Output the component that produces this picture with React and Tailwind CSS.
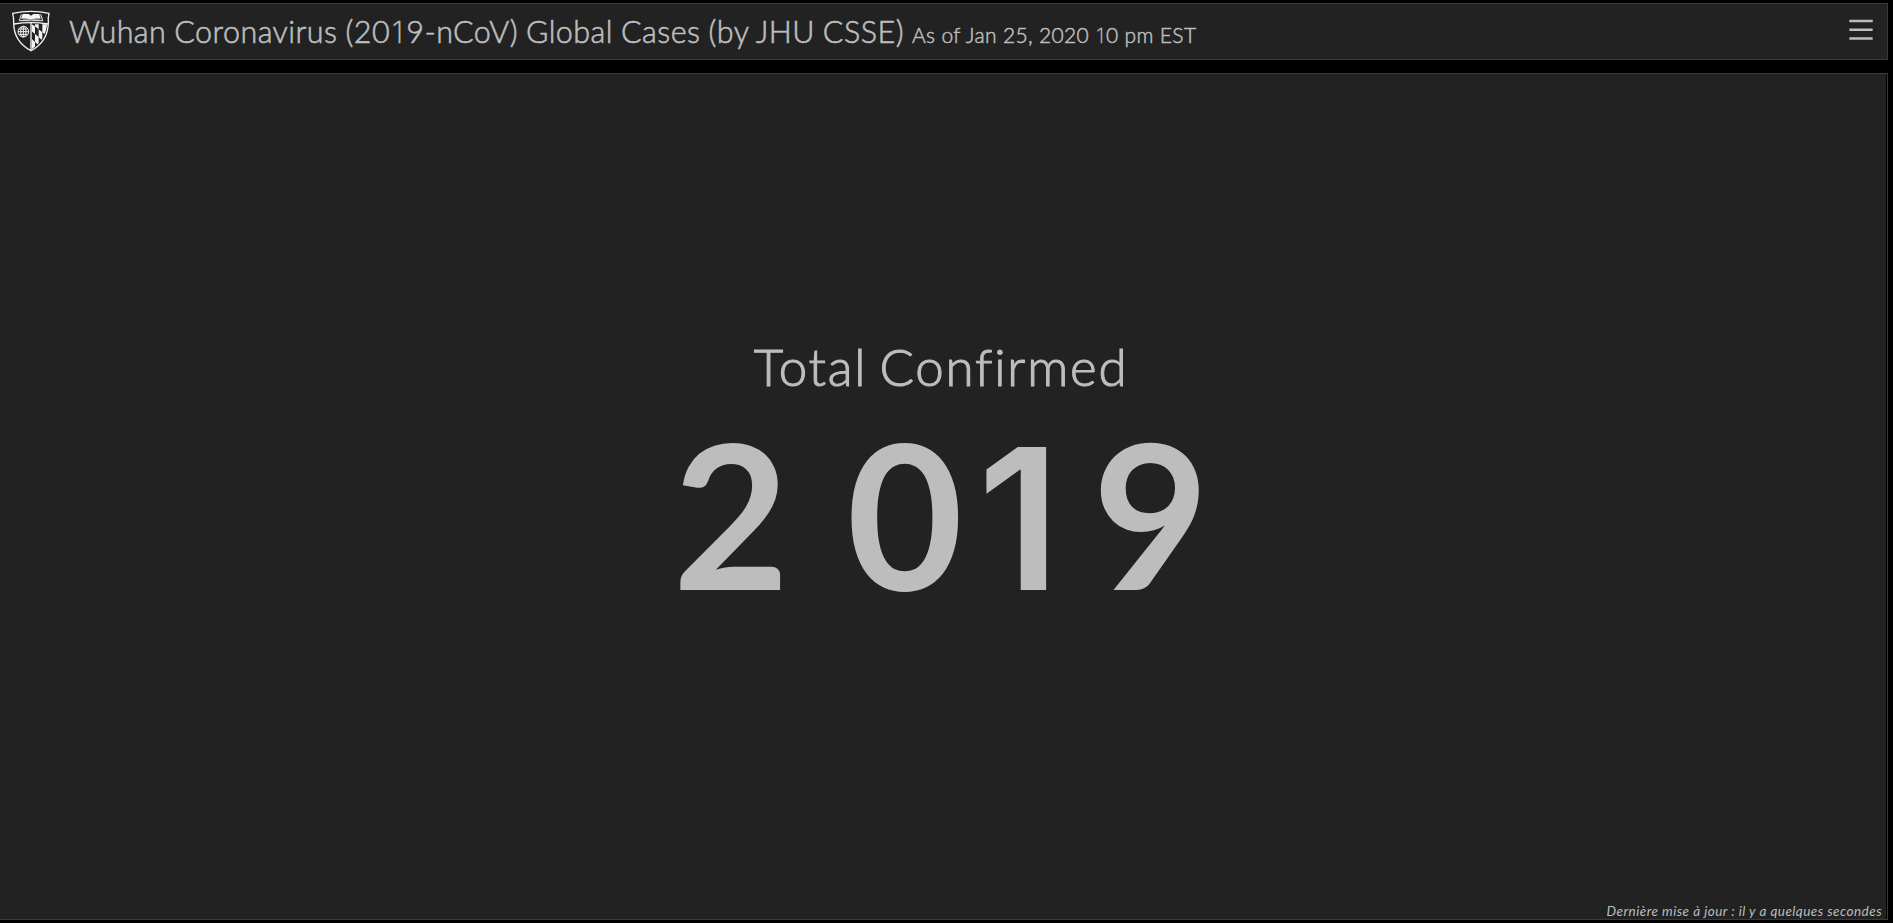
function Shield() {
  return (
    <svg viewBox="0 0 150 150" className="h-[50px] w-[50px] shrink-0" fill="none" stroke="#f4f4f4">
      <clipPath id="shield-right">
        <path d="M71 55 H117 C114 88 96 113 71 130 Z" />
      </clipPath>
      <path d="M14 22 Q69 10 123 22 C121 30 120 40 121 50 C120 92 99 118 69 134 C39 118 17 92 17 50 C18 40 16 30 14 22 Z" strokeWidth="4" />
      <path d="M18 54 Q69 46 120 54" strokeWidth="4" />
      <path d="M69 50 V133" strokeWidth="4" />
      <path d="M44 24 H62 L69 29 L76 24 H94 L98 38 Q82 36 69 42 Q56 36 39 38 Z" fill="#f4f4f4" stroke="none" />
      <path d="M40 25 L34 44 H104 L98 25" strokeWidth="3" />
      <path d="M44 40 Q60 38 69 43 Q78 38 94 40" stroke="#999999" strokeWidth="4" />
      <g strokeWidth="3">
        <circle cx="46" cy="77" r="16" />
        <ellipse cx="46" cy="77" rx="8" ry="16" />
        <path d="M46 61 V93 M30 77 H62 M33 69 H59 M33 85 H59" />
      </g>
      <g clipPath="url(#shield-right)" fill="#f4f4f4" stroke="none">
        <path d="M71 55 L81 61 V84 L71 76 Z" />
        <path d="M81 84 L92 93 V118 L81 108 Z" />
        <path d="M81 54 H92 V70 L81 61 Z" />
        <path d="M92 70 L103 79 V104 L92 93 Z" />
        <path d="M103 54 H119 V91 L103 79 Z" />
        <path d="M71 98 L81 108 V128 L71 132 Z" />
      </g>
    </svg>
  );
}

export default function App() {
  return (
    <div className="flex h-screen flex-col gap-[13px] overflow-hidden bg-black pt-[3px] pr-[5px] pb-[3px] font-['Lato',sans-serif] text-[#bdbdbd]">
      <header className="flex h-[57px] shrink-0 items-start border-y border-r border-[#3a3a3a] bg-[#222222] pt-[2px] pr-[14px] pl-2">
        <Shield />
        <h1 className="ml-[11px] flex grow items-baseline pt-[7px] leading-[36px] font-light whitespace-nowrap [-webkit-text-stroke:0.6px_#bdbdbd]">
          <span className="text-[30.5px] tracking-[0.46px] [word-spacing:-0.8px]">
            Wuhan Coronavirus (20<span className="pl-[2px] font-['Inter'] text-[29.5px] font-extralight tracking-[3px] [-webkit-text-stroke:0.4px_#bdbdbd]">1</span>9-nCoV) Global Cases (by JHU CSSE)
          </span>
          <span className="ml-[8px] text-[21px] tracking-[0.35px] [-webkit-text-stroke:0.5px_#bdbdbd]">
            As of Jan 25, 2020 <span className="pl-px font-['Inter'] text-[20.5px] font-extralight tracking-[2px] [-webkit-text-stroke:0.3px_#bdbdbd]">1</span>0 pm EST
          </span>
        </h1>
        <button aria-label="Menu" className="mt-[13px]">
          <svg viewBox="0 0 24 22" className="h-[22px] w-6" fill="#bdbdbd">
            <rect x="0.3" y="0.7" width="23.4" height="2.6" rx="0.5" />
            <rect x="0.3" y="9.5" width="23.4" height="2.6" rx="0.5" />
            <rect x="0.3" y="18.2" width="23.4" height="2.6" rx="0.5" />
          </svg>
        </button>
      </header>
      <main className="flex grow flex-col border-y border-r border-[#3a3a3a] bg-black pr-px">
        <section className="flex grow flex-col items-center bg-[#222222] pt-[263px]">
          <h2 className="pr-[4px] text-[51px] leading-[60px] font-light tracking-[1.8px] [-webkit-text-stroke:1.1px_#bdbdbd] [word-spacing:-3.5px]">Total Confirmed</h2>
          <div className="-mt-[3px] flex h-[238px] items-baseline pl-[2px] text-[201px] leading-[238px] font-bold tracking-[6.2px] whitespace-pre [word-spacing:-4px]">
            <span>2 0</span>
            <span className="w-[123px] pl-[8px] font-['Inter'] text-[196px] font-semibold tracking-normal">1</span>
            <span>9</span>
          </div>
          <p className="mt-auto self-end pr-[4px] text-[13.5px] leading-[16px] tracking-[0.47px] italic">
            Dernière mise à jour : il y a quelques secondes
          </p>
        </section>
      </main>
    </div>
  );
}
